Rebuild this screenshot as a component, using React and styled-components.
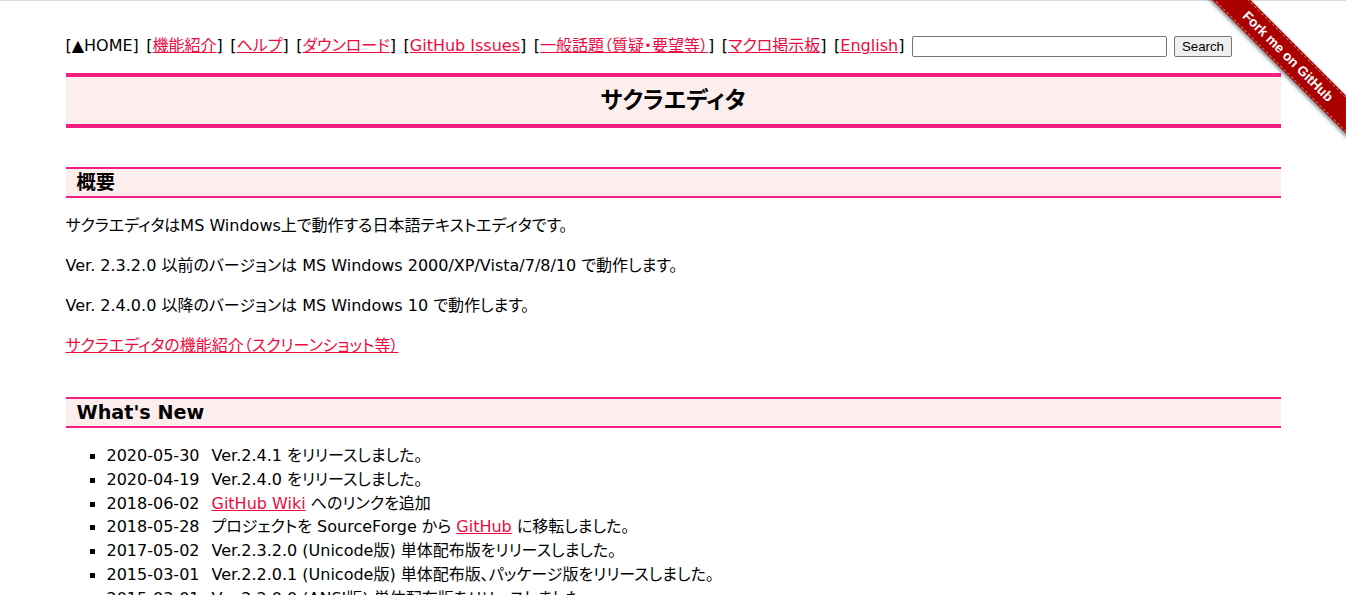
import React from 'react';
import styled, { createGlobalStyle } from 'styled-components';

const GlobalStyle = createGlobalStyle`
  html {
    border-top: 1px solid #dadada;
  }
  body {
    margin: 0;
    background: #fff;
    color: #000;
    font-family: "DejaVu Sans", "Noto Sans CJK JP", sans-serif;
    font-size: 16px;
    font-feature-settings: "palt" 1;
  }
`;

const navItems = [
  { label: '機能紹介' },
  { label: 'ヘルプ' },
  { label: 'ダウンロード' },
  { label: 'GitHub Issues' },
  { label: '一般話題（質疑・要望等）' },
  { label: 'マクロ掲示板' },
  { label: 'English' },
];

const news = [
  { date: '2020-05-30', text: 'Ver.2.4.1 をリリースしました。' },
  { date: '2020-04-19', text: 'Ver.2.4.0 をリリースしました。' },
  { date: '2018-06-02', link: 'GitHub Wiki', text: ' へのリンクを追加' },
  { date: '2018-05-28', pre: 'プロジェクトを SourceForge から ', link: 'GitHub', text: ' に移転しました。' },
  { date: '2017-05-02', text: 'Ver.2.3.2.0 (Unicode版) 単体配布版をリリースしました。' },
  { date: '2015-03-01', text: 'Ver.2.2.0.1 (Unicode版) 単体配布版、パッケージ版をリリースしました。' },
  { date: '2015-03-01', text: 'Ver.2.2.0.0 (ANSI版) 単体配布版をリリースしました。' },
];

function App() {
  return (
    <>
      <GlobalStyle />
      <Ribbon>
        <RibbonBand>Fork me on GitHub</RibbonBand>
      </Ribbon>
      <Page>
        <Nav>
          <span>[▲HOME]</span>
          {navItems.map((item) => (
            <span key={item.label}>
              [<NavLink href="#">{item.label}</NavLink>]
            </span>
          ))}
          <SearchForm>
            <SearchInput type="text" />
            <SearchButton type="button">Search</SearchButton>
          </SearchForm>
        </Nav>

        <TitleBox>サクラエディタ</TitleBox>

        <SectionHeading>概要</SectionHeading>
        <Para>サクラエディタはMS Windows上で動作する日本語テキストエディタです。</Para>
        <Para>Ver. 2.3.2.0 以前のバージョンは MS Windows 2000/XP/Vista/7/8/10 で動作します。</Para>
        <Para>Ver. 2.4.0.0 以降のバージョンは MS Windows 10 で動作します。</Para>
        <Para>
          <TextLink href="#">サクラエディタの機能紹介（スクリーンショット等）</TextLink>
        </Para>

        <SectionHeading>What's New</SectionHeading>
        <NewsList>
          {news.map((n, i) => (
            <NewsItem key={i}>
              <NewsDate>{n.date}</NewsDate>
              {n.pre}
              {n.link && <TextLink href="#">{n.link}</TextLink>}
              {n.text}
            </NewsItem>
          ))}
        </NewsList>
      </Page>
    </>
  );
}

const Page = styled.div`
  width: 1215px;
  margin: 0 auto;
  padding-top: 34px;
`;

const Nav = styled.div`
  display: flex;
  align-items: center;
  gap: 7.5px;
  font-size: 16px;
  line-height: 22px;
  white-space: nowrap;
`;

const NavLink = styled.a`
  color: #ee0a3f;
  text-decoration: underline;
`;

const SearchForm = styled.form`
  display: flex;
  align-items: center;
  gap: 7px;
`;

const SearchInput = styled.input`
  width: 249px;
  height: 17px;
  padding: 1px 2px;
  border: 1px solid #767676;
  border-radius: 2px;
  font-size: 13px;
`;

const SearchButton = styled.button`
  height: 21px;
  padding: 0 7px;
  border: 1px solid #767676;
  border-radius: 2px;
  background: #efefef;
  color: #000;
  font-family: "Liberation Sans", Arial, sans-serif;
  font-size: 13.3px;
`;

const TitleBox = styled.h1`
  margin: 16px 0 0;
  border-top: 4px solid #f41e83;
  border-bottom: 4px solid #f41e83;
  background: #fdeeee;
  text-align: center;
  font-size: 23px;
  font-weight: 700;
  line-height: 47px;
`;

const SectionHeading = styled.h2`
  margin: 39px 0 15px;
  padding-left: 11px;
  border-top: 2px solid #f41e83;
  border-bottom: 2px solid #f41e83;
  background: #fdeeee;
  font-size: 19.2px;
  font-weight: 700;
  line-height: 27px;
`;

const Para = styled.p`
  margin: 16px 0;
  line-height: 24px;
`;

const TextLink = styled.a`
  color: #ee0a3f;
  text-decoration: underline;
`;

const NewsList = styled.ul`
  margin: 16px 0 0;
  padding-left: 41px;
  list-style: none;
`;

const NewsItem = styled.li`
  position: relative;
  line-height: 23.8px;

  &::before {
    content: '';
    position: absolute;
    left: -17px;
    top: 10px;
    width: 5px;
    height: 5px;
    background: #000;
  }
`;

const NewsDate = styled.span`
  margin-right: 12px;
`;

const Ribbon = styled.div`
  position: absolute;
  top: 0;
  right: 0;
  width: 150px;
  height: 150px;
  overflow: hidden;
`;

const RibbonBand = styled.div`
  position: absolute;
  left: -18px;
  top: 43px;
  width: 220px;
  height: 27px;
  transform: rotate(45deg);
  background: #aa0000;
  box-shadow: 0 2px 4px rgba(0, 0, 0, 0.5);
  color: #fff;
  font-family: "Liberation Sans", Arial, sans-serif;
  font-size: 13.5px;
  font-weight: 700;
  line-height: 27px;
  text-align: center;

  &::before,
  &::after {
    content: '';
    position: absolute;
    left: 0;
    right: 0;
    border-top: 1px dashed rgba(255, 255, 255, 0.45);
  }
  &::before { top: 1px; }
  &::after { bottom: 1px; }
`;

export default App;
